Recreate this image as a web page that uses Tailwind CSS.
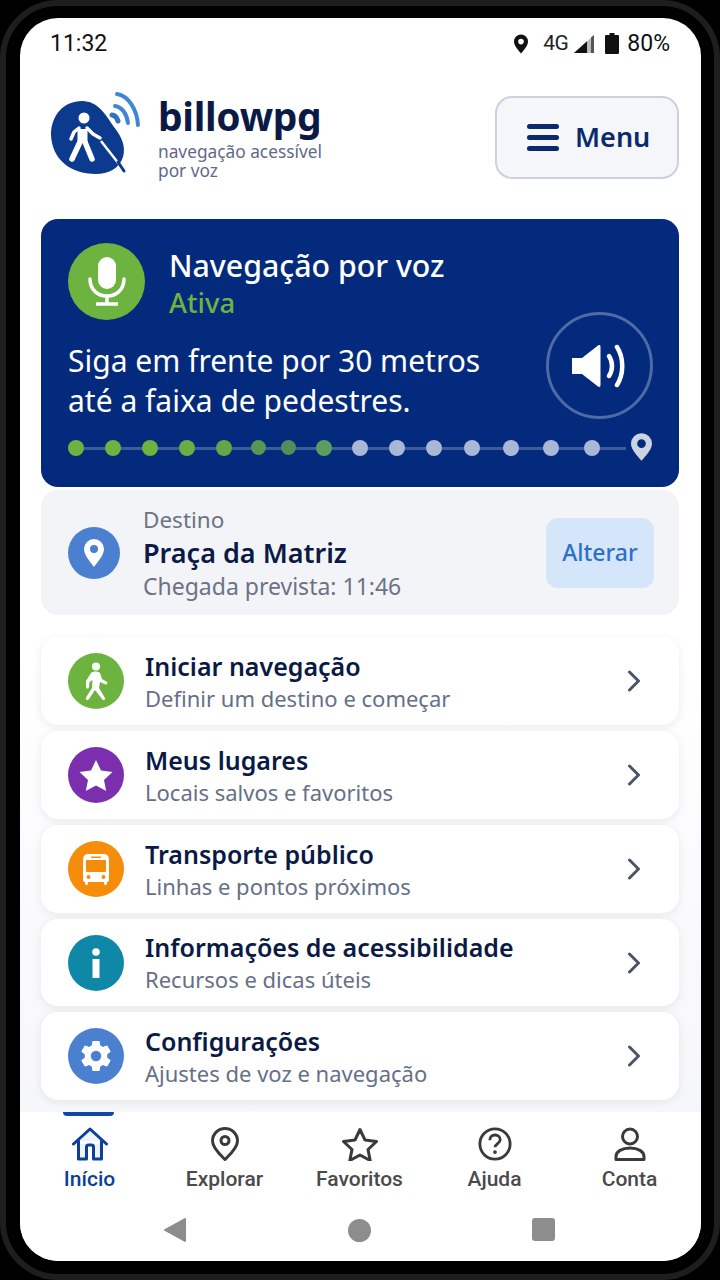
<!DOCTYPE html>
<html lang="pt-BR">
<head>
    <meta charset="UTF-8">
    <meta name="viewport" content="width=device-width, initial-scale=1.0">
    <title>billowpg</title>
    <script src="https://cdn.jsdelivr.net/npm/@tailwindcss/browser@4"></script>
</head>
<body class="w-[720px] h-[1280px] bg-black overflow-hidden font-['Noto_Sans',sans-serif]">
    <!-- phone rim -->
    <div class="w-[720px] h-[1280px] rounded-[58px] border-[6px] border-[#1e1e1e] bg-black pl-[14px] pr-[13px] pt-[12px] pb-[13px]">
        <div class="w-[681px] h-[1243px] rounded-[38px] overflow-hidden flex flex-col bg-gradient-to-b from-white via-white to-[#f3f4f8]">

            <!-- status bar -->
            <div class="h-[50px] shrink-0 flex items-center justify-between pl-[30px] pr-[31px] pt-[1px] font-['Roboto',sans-serif] text-[#111]">
                <span class="text-[23px] leading-none">11:32</span>
                <div class="flex items-center">
                    <svg class="w-[18px] h-[22px]" viewBox="0 0 18 22"><path fill-rule="evenodd" fill="#111" d="M9 1.500a7 7 0 0 0-7 7c0 4.500 5 9.500 7 12 2-2.500 7-7.500 7-12a7 7 0 0 0-7-7zm0 4.300a2.800 2.800 0 1 1 0 5.600 2.800 2.800 0 0 1 0-5.600z"/></svg>
                    <span class="text-[21px] leading-none ml-[13px] tracking-[-0.5px] text-[#222]">4G</span>
                    <svg class="w-[21px] h-[20px] ml-[6px]" viewBox="0 0 21 20"><path d="M0 19 20 1v18z" fill="#bbb"/><path d="M0 19 13 7.300V19z" fill="#111"/><path d="M17 3.500V19h3V1z" fill="#555"/></svg>
                    <svg class="w-[14px] h-[21px] ml-[10px]" viewBox="0 0 14 21"><path d="M4.500 0h5v2H13a1 1 0 0 1 1 1v17a1 1 0 0 1-1 1H1a1 1 0 0 1-1-1V3a1 1 0 0 1 1-1h3.500z" fill="#111"/></svg>
                    <span class="text-[23px] leading-none ml-[8px]">80%</span>
                </div>
            </div>

            <!-- header -->
            <div class="h-[151px] shrink-0 flex items-start justify-between pl-[30px] pr-[22px]">
                <div class="flex items-start pt-[23px]">
                    <svg class="w-[92px] h-[84px] shrink-0" viewBox="0 0 92 84">
                        <path fill="#0b3a8e" d="M1 44C1 24 14 10 32 10c16 0 24 14 32 26 8 10 12 20 9 30-4 12-15 17-27 17C20 83 2 68 1 44z"/>
                        <circle cx="34" cy="27" r="5.500" fill="#fff"/>
                        <path d="M32.500 38v14" stroke="#fff" stroke-width="10" fill="none"/>
                        <path d="M29 37l-5 4-3 7" stroke="#fff" stroke-width="3.500" fill="none" stroke-linecap="round" stroke-linejoin="round"/>
                        <path d="M37 37l6 6 7 4" stroke="#fff" stroke-width="3.500" fill="none" stroke-linecap="round" stroke-linejoin="round"/>
                        <path d="M30 51l-8 17" stroke="#fff" stroke-width="5.500" fill="none" stroke-linecap="round"/>
                        <path d="M35 51l7 17" stroke="#fff" stroke-width="5.500" fill="none" stroke-linecap="round"/>
                        <path d="M51 50l18 23" stroke="#fff" stroke-width="2.500" fill="none"/>
                        <path d="M68 71l6 9" stroke="#0b3a8e" stroke-width="3" fill="none" stroke-linecap="round"/>
                        <path d="M62 24c3 .500 5 2.500 6 6" fill="none" stroke="#2f74c4" stroke-width="5" stroke-linecap="round"/>
                        <path d="M65 15c7 1 12 8 13 17" fill="none" stroke="#3f87d6" stroke-width="4" stroke-linecap="round"/>
                        <path d="M67 3c12 2 20 16 21 31" fill="none" stroke="#3f87d6" stroke-width="4" stroke-linecap="round"/>
                    </svg>
                    <div class="ml-[16px] pt-[5px]">
                        <div class="text-[39px] leading-[40px] font-bold text-[#0a1a45] tracking-[-0.3px]">billowpg</div>
                        <div class="text-[17.300px] leading-[19px] text-[#5d6a88] mt-[6px]">navegação acessível<br>por voz</div>
                    </div>
                </div>
                <div class="mt-[28px] w-[184px] h-[83px] rounded-[17px] border-2 border-[#cdd1de] bg-[#f5f6fa] flex items-center pl-[30px]">
                    <div class="w-[32px] flex flex-col gap-[6px]">
                        <div class="h-[5px] rounded-sm bg-[#0b2a6e]"></div>
                        <div class="h-[5px] rounded-sm bg-[#0b2a6e]"></div>
                        <div class="h-[5px] rounded-sm bg-[#0b2a6e]"></div>
                    </div>
                    <span class="ml-[16px] text-[27px] font-semibold text-[#0b2a6e]">Menu</span>
                </div>
            </div>

            <!-- voice card -->
            <div class="ml-[21px] mr-[22px] h-[268px] shrink-0 rounded-[17px] bg-[#032a7c] pl-[27px] pr-[27px] pt-[24px] text-white">
                <div class="flex items-center h-[76px]">
                    <div class="w-[77px] h-[77px] rounded-full bg-[#6db33f] flex items-center justify-center">
                        <svg class="w-[40px] h-[50px]" viewBox="0 0 40 50">
                            <rect x="11" y="1" width="18" height="32" rx="9" fill="#fff"/>
                            <path d="M3 23c0 11 8 17 17 17s17-6 17-17" fill="none" stroke="#fff" stroke-width="3.500" stroke-linecap="round"/>
                            <path d="M20 40v7M9 48h22" fill="none" stroke="#fff" stroke-width="3.500"/>
                        </svg>
                    </div>
                    <div class="ml-[24px] pt-[4px]">
                        <div class="text-[30.300px] leading-[40px] font-medium">Navegação por voz</div>
                        <div class="text-[27.500px] leading-[34px] font-medium text-[#6db33f]">Ativa</div>
                    </div>
                </div>
                <div class="flex items-start justify-between">
                    <div class="text-[30px] leading-[40px] pt-[22px]">Siga em frente por 30 metros<br>até a faixa de pedestres.</div>
                    <div class="w-[107px] h-[107px] rounded-full border-[3px] border-[#4e6ba6] flex items-center justify-center mt-[-7px] mr-[-1px]">
                        <svg class="w-[58px] h-[44px]" viewBox="0 0 58 44">
                            <path d="M1 14h10L27 1.500c1.500-1 2.500-.500 2.500 1.500v38c0 2-1 2.500-2.500 1.500L11 30H1z" fill="#fff"/>
                            <path d="M38 12c4 6 4 14 0 20" fill="none" stroke="#fff" stroke-width="4.500" stroke-linecap="round"/>
                            <path d="M46 3c7 11 7 27 0 38" fill="none" stroke="#fff" stroke-width="4.500" stroke-linecap="round"/>
                        </svg>
                    </div>
                </div>
                <!-- progress dots -->
                <div class="relative h-[30px] mt-[12px] flex items-center">
                    <div class="absolute left-0 right-[26px] top-[14px] h-[3px] bg-[#3e5c99]"></div>
                    <div class="relative w-[574px] h-[16px]">
                        <div class="absolute left-0 w-[16px] h-[16px] rounded-full bg-[#6db33f]"></div>
                        <div class="absolute left-[37px] w-[16px] h-[16px] rounded-full bg-[#6db33f]"></div>
                        <div class="absolute left-[74px] w-[16px] h-[16px] rounded-full bg-[#6db33f]"></div>
                        <div class="absolute left-[111px] w-[16px] h-[16px] rounded-full bg-[#68ad45]"></div>
                        <div class="absolute left-[148px] w-[16px] h-[16px] rounded-full bg-[#62a84b]"></div>
                        <div class="absolute left-[183px] w-[15px] h-[15px] rounded-full bg-[#559856]"></div>
                        <div class="absolute left-[213px] w-[15px] h-[15px] rounded-full bg-[#4f9059]"></div>
                        <div class="absolute left-[248px] w-[16px] h-[16px] rounded-full bg-[#5a9f5d]"></div>
                        <div class="absolute left-[284px] w-[16px] h-[16px] rounded-full bg-[#a9b8d6]"></div>
                        <div class="absolute left-[321px] w-[16px] h-[16px] rounded-full bg-[#a9b8d6]"></div>
                        <div class="absolute left-[358px] w-[16px] h-[16px] rounded-full bg-[#a9b8d6]"></div>
                        <div class="absolute left-[396px] w-[16px] h-[16px] rounded-full bg-[#a9b8d6]"></div>
                        <div class="absolute left-[435px] w-[16px] h-[16px] rounded-full bg-[#a9b8d6]"></div>
                        <div class="absolute left-[475px] w-[16px] h-[16px] rounded-full bg-[#a9b8d6]"></div>
                        <div class="absolute left-[516px] w-[16px] h-[16px] rounded-full bg-[#a9b8d6]"></div>
                    </div>
                    <svg class="absolute right-[0px] top-[0px] w-[21px] h-[28px]" viewBox="0 0 22 29"><path fill-rule="evenodd" fill="#ccd4e4" d="M11 0a11 11 0 0 0-11 11c0 6 7 13 11 18 4-5 11-12 11-18A11 11 0 0 0 11 0zm0 6.500a4.500 4.500 0 1 1 0 9 4.500 4.500 0 0 1 0-9z"/></svg>
                </div>
            </div>

            <!-- destination -->
            <div class="ml-[21px] mr-[22px] mt-[3px] h-[125px] shrink-0 rounded-[17px] bg-[#f3f4f7] flex items-center pl-[27px] pr-[25px]">
                <div class="w-[52px] h-[52px] rounded-full bg-[#4a80cf] flex items-center justify-center">
                    <svg class="w-[22px] h-[30px]" viewBox="0 0 22 30"><path fill-rule="evenodd" fill="#fff" d="M11 1a10 10 0 0 0-10 10c0 6.500 6.500 13 10 18 3.500-5 10-11.500 10-18A10 10 0 0 0 11 1zm0 6a4 4 0 1 1 0 8 4 4 0 0 1 0-8z"/></svg>
                </div>
                <div class="ml-[23px] flex-1">
                    <div class="text-[22.500px] leading-[30px] text-[#6b7285]">Destino</div>
                    <div class="text-[27px] leading-[36px] font-semibold text-[#0a1a45]">Praça da Matriz</div>
                    <div class="text-[23px] leading-[30px] text-[#6b7285]">Chegada prevista: 11:46</div>
                </div>
                <div class="w-[108px] h-[70px] rounded-[12px] bg-[#d6e6fa] flex items-center justify-center text-[23px] font-medium text-[#2e6fc8]">Alterar</div>
            </div>

            <!-- menu list -->
            <div class="ml-[21px] mr-[22px] mt-[22px] flex flex-col gap-[6px] shrink-0">
                <div class="h-[88px] rounded-[17px] bg-white shadow-[0_2px_8px_rgba(20,30,70,0.08)] flex items-center pl-[27px] pr-[38px]">
                    <div class="w-[56px] h-[56px] rounded-full bg-[#6db33f] flex items-center justify-center shrink-0">
                        <svg class="w-[26px] h-[38px]" viewBox="0 0 26 38"><circle cx="13" cy="4.500" r="4" fill="#fff"/><path fill="#fff" d="M8 11c2-2 7-2 9 0l2 6 5 3c1 1 0 3-1.500 2.500L17 20l-1 6 6 10c1 2-2 3-3 1l-7-9-6 9c-1.500 2-4 .500-3-1.500l6-9.500.500-8-3 2-.500 5c0 2-3 2-3 0v-6z"/></svg>
                    </div>
                    <div class="ml-[21px] flex-1">
                        <div class="text-[25px] leading-[33px] font-semibold text-[#0a1a45]">Iniciar navegação</div>
                        <div class="text-[22px] leading-[30px] text-[#657088]">Definir um destino e começar</div>
                    </div>
                    <svg class="w-[14px] h-[22px]" viewBox="0 0 14 22"><path d="M2.500 2l9 9-9 9" fill="none" stroke="#4b5568" stroke-width="3" stroke-linecap="round" stroke-linejoin="round"/></svg>
                </div>
                <div class="h-[88px] rounded-[17px] bg-white shadow-[0_2px_8px_rgba(20,30,70,0.08)] flex items-center pl-[27px] pr-[38px]">
                    <div class="w-[56px] h-[56px] rounded-full bg-[#7b2fae] flex items-center justify-center shrink-0">
                        <svg class="w-[34px] h-[32px]" viewBox="0 0 34 32"><path fill="#fff" d="M17 1l5 10.500 11.500 1.500-8.500 8 2.200 11L17 26.500 6.800 32 9 21 .500 13 12 11.500z"/></svg>
                    </div>
                    <div class="ml-[21px] flex-1">
                        <div class="text-[25px] leading-[33px] font-semibold text-[#0a1a45]">Meus lugares</div>
                        <div class="text-[22px] leading-[30px] text-[#657088]">Locais salvos e favoritos</div>
                    </div>
                    <svg class="w-[14px] h-[22px]" viewBox="0 0 14 22"><path d="M2.500 2l9 9-9 9" fill="none" stroke="#4b5568" stroke-width="3" stroke-linecap="round" stroke-linejoin="round"/></svg>
                </div>
                <div class="h-[88px] rounded-[17px] bg-white shadow-[0_2px_8px_rgba(20,30,70,0.08)] flex items-center pl-[27px] pr-[38px]">
                    <div class="w-[56px] h-[56px] rounded-full bg-[#f58c0a] flex items-center justify-center shrink-0">
                        <svg class="w-[26px] h-[31px]" viewBox="0 0 26 31"><path fill-rule="evenodd" fill="#fff" d="M5 0h16a5 5 0 0 1 5 5v21a2 2 0 0 1-2 2v1.500a1.500 1.500 0 0 1-3 0V28H5v1.500a1.500 1.500 0 0 1-3 0V28a2 2 0 0 1-2-2V5a5 5 0 0 1 5-5zM8 2.500V4h10V2.500zM3 7v10a1 1 0 0 0 1 1h18a1 1 0 0 0 1-1V7a1 1 0 0 0-1-1H4a1 1 0 0 0-1 1zm2.500 14a2 2 0 1 0 0 4 2 2 0 0 0 0-4zm15 0a2 2 0 1 0 0 4 2 2 0 0 0 0-4z"/></svg>
                    </div>
                    <div class="ml-[21px] flex-1">
                        <div class="text-[25px] leading-[33px] font-semibold text-[#0a1a45]">Transporte público</div>
                        <div class="text-[22px] leading-[30px] text-[#657088]">Linhas e pontos próximos</div>
                    </div>
                    <svg class="w-[14px] h-[22px]" viewBox="0 0 14 22"><path d="M2.500 2l9 9-9 9" fill="none" stroke="#4b5568" stroke-width="3" stroke-linecap="round" stroke-linejoin="round"/></svg>
                </div>
                <div class="h-[87px] rounded-[17px] bg-white shadow-[0_2px_8px_rgba(20,30,70,0.08)] flex items-center pl-[27px] pr-[38px]">
                    <div class="w-[56px] h-[56px] rounded-full bg-[#0f88a8] flex items-center justify-center shrink-0">
                        <svg class="w-[10px] h-[30px]" viewBox="0 0 10 30"><circle cx="5" cy="4" r="3.800" fill="#fff"/><rect x="1.500" y="11" width="7" height="19" fill="#fff"/></svg>
                    </div>
                    <div class="ml-[21px] flex-1">
                        <div class="text-[25px] leading-[33px] font-semibold text-[#0a1a45]">Informações de acessibilidade</div>
                        <div class="text-[22px] leading-[30px] text-[#657088]">Recursos e dicas úteis</div>
                    </div>
                    <svg class="w-[14px] h-[22px]" viewBox="0 0 14 22"><path d="M2.500 2l9 9-9 9" fill="none" stroke="#4b5568" stroke-width="3" stroke-linecap="round" stroke-linejoin="round"/></svg>
                </div>
                <div class="h-[88px] rounded-[17px] bg-white shadow-[0_2px_8px_rgba(20,30,70,0.08)] flex items-center pl-[27px] pr-[38px]">
                    <div class="w-[56px] h-[56px] rounded-full bg-[#4a80cf] flex items-center justify-center shrink-0">
                        <svg class="w-[36px] h-[36px]" viewBox="0 0 24 24"><path fill-rule="evenodd" fill="#fff" d="M19.430 12.980c.040-.320.070-.640.070-.980s-.030-.660-.070-.980l2.110-1.650c.190-.150.240-.420.120-.640l-2-3.460c-.120-.220-.390-.300-.610-.220l-2.490 1c-.520-.400-1.080-.730-1.690-.980l-.380-2.650C14.460 2.180 14.250 2 14 2h-4c-.250 0-.460.180-.490.420l-.380 2.650c-.610.250-1.170.590-1.690.980l-2.490-1c-.230-.090-.490 0-.610.220l-2 3.460c-.130.220-.070.490.120.640l2.110 1.650c-.040.320-.070.650-.070.980s.030.660.070.980l-2.110 1.650c-.190.150-.240.420-.120.640l2 3.460c.120.220.390.300.610.220l2.490-1c.520.400 1.080.730 1.690.980l.380 2.650c.030.240.240.420.490.420h4c.250 0 .460-.180.490-.420l.380-2.650c.610-.250 1.170-.590 1.690-.980l2.490 1c.230.090.490 0 .610-.220l2-3.460c.120-.220.070-.490-.120-.640l-2.110-1.650zM12 15.500a3.500 3.500 0 1 1 0-7 3.500 3.500 0 0 1 0 7z"/></svg>
                    </div>
                    <div class="ml-[21px] flex-1">
                        <div class="text-[25px] leading-[33px] font-semibold text-[#0a1a45]">Configurações</div>
                        <div class="text-[22px] leading-[30px] text-[#657088]">Ajustes de voz e navegação</div>
                    </div>
                    <svg class="w-[14px] h-[22px]" viewBox="0 0 14 22"><path d="M2.500 2l9 9-9 9" fill="none" stroke="#4b5568" stroke-width="3" stroke-linecap="round" stroke-linejoin="round"/></svg>
                </div>
            </div>

            <!-- bottom nav -->
            <div class="mt-[12px] flex-1 bg-white relative font-['Roboto',sans-serif]">
                <div class="absolute left-[43px] top-0 w-[51px] h-[4px] rounded-b-sm bg-[#0b4aa6]"></div>
                <div class="flex h-[86px] pt-[15px] pl-[2px]">
                    <div class="w-[135px] flex flex-col items-center text-[#0b3f9a]">
                        <svg class="w-[36px] h-[34px]" viewBox="0 0 36 34"><path d="M1.500 17 18 2l16.500 15M6.500 14v18h8V20a2 2 0 0 1 2-2h3a2 2 0 0 1 2 2v12h8V14" fill="#eef2fa" stroke="#0b3f9a" stroke-width="3" stroke-linejoin="round" stroke-linecap="round"/></svg>
                        <span class="text-[21px] leading-[24px] mt-[6px] font-medium">Início</span>
                    </div>
                    <div class="w-[135px] flex flex-col items-center text-[#4a4a4a]">
                        <svg class="w-[28px] h-[34px]" viewBox="0 0 28 34"><path d="M14 1.500A12.500 12.500 0 0 0 1.500 14c0 7 8 14 12.500 18.500C18.500 28 26.500 21 26.500 14A12.500 12.500 0 0 0 14 1.500z" fill="none" stroke="#3a3a3a" stroke-width="3" stroke-linejoin="round"/><circle cx="14" cy="13.500" r="4" fill="none" stroke="#3a3a3a" stroke-width="3"/></svg>
                        <span class="text-[21px] leading-[24px] mt-[6px] font-medium">Explorar</span>
                    </div>
                    <div class="w-[135px] flex flex-col items-center text-[#4a4a4a]">
                        <svg class="w-[36px] h-[34px]" viewBox="0 0 36 34"><path d="M18 2.500l5 10.500 11.500 1.500-8.500 8 2.200 11L18 28l-10.200 5.500L10 22.500l-8.500-8L13 13z" fill="none" stroke="#3a3a3a" stroke-width="3" stroke-linejoin="round"/></svg>
                        <span class="text-[21px] leading-[24px] mt-[6px] font-medium">Favoritos</span>
                    </div>
                    <div class="w-[135px] flex flex-col items-center text-[#4a4a4a]">
                        <svg class="w-[36px] h-[34px]" viewBox="0 0 36 36"><circle cx="18" cy="18" r="16" fill="none" stroke="#3a3a3a" stroke-width="3"/><path d="M12.500 14c0-3.500 2.500-5.500 5.500-5.500s5.500 2 5.500 5c0 4-5.500 4-5.500 8" fill="none" stroke="#3a3a3a" stroke-width="3"/><circle cx="18" cy="26.500" r="2" fill="#3a3a3a"/></svg>
                        <span class="text-[21px] leading-[24px] mt-[6px] font-medium">Ajuda</span>
                    </div>
                    <div class="w-[135px] flex flex-col items-center text-[#4a4a4a]">
                        <svg class="w-[32px] h-[34px]" viewBox="0 0 32 34"><circle cx="16" cy="9.500" r="7.500" fill="none" stroke="#3a3a3a" stroke-width="3"/><path d="M2 32.500v-3c0-5 6-8.500 14-8.500s14 3.500 14 8.500v3z" fill="none" stroke="#3a3a3a" stroke-width="3" stroke-linejoin="round"/></svg>
                        <span class="text-[21px] leading-[24px] mt-[6px] font-medium">Conta</span>
                    </div>
                </div>
                <!-- android nav keys -->
                <div class="relative h-[46px]">
                    <svg class="absolute left-[143px] top-[19px] w-[24px] h-[26px]" viewBox="0 0 24 26"><path d="M22 1 2 12a1 1 0 0 0 0 2l20 11a1 1 0 0 0 1-1V2a1 1 0 0 0-1-1z" fill="#8d8d8d"/></svg>
                    <div class="absolute left-[328px] top-[21px] w-[23px] h-[23px] rounded-full bg-[#8d8d8d]"></div>
                    <div class="absolute left-[512px] top-[20px] w-[23px] h-[23px] rounded-[3px] bg-[#8d8d8d]"></div>
                </div>
            </div>
        </div>
    </div>
</body>
</html>
